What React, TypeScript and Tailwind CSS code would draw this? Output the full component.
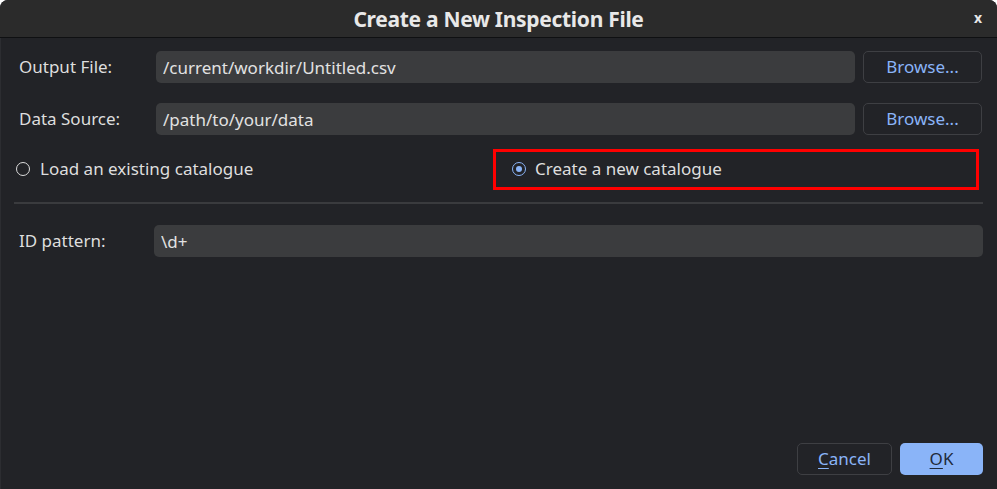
import React, { useState } from 'react';

function Radio({ checked }: { checked: boolean }) {
  return (
    <span
      className={`flex h-[14px] w-[14px] shrink-0 items-center justify-center rounded-full border-[1.5px] ${
        checked ? 'border-[#8ab4f8]' : 'border-[#dcdcdc]'
      }`}
    >
      {checked && <span className="h-[6px] w-[6px] rounded-full bg-[#8ab4f8]" />}
    </span>
  );
}

function TextField({ value, onChange }: { value: string; onChange: (v: string) => void }) {
  return (
    <input
      value={value}
      onChange={(e) => onChange(e.target.value)}
      className="h-[32px] min-w-0 flex-1 rounded-[5px] bg-[#3b3c3e] px-[7px] text-[17px] text-[#e2e2e2] outline-none"
    />
  );
}

export default function App() {
  const [outputFile, setOutputFile] = useState('/current/workdir/Untitled.csv');
  const [dataSource, setDataSource] = useState('/path/to/your/data');
  const [idPattern, setIdPattern] = useState('\\d+');
  const [mode, setMode] = useState<'load' | 'create'>('create');

  return (
    <div className="flex h-[489px] w-[997px] flex-col overflow-hidden rounded-t-[8px] bg-[#222327] font-['Noto_Sans',sans-serif] text-[17px] text-[#dedede]">
      {/* title bar */}
      <div className="relative flex h-[38px] shrink-0 items-center justify-center border-b border-[#0f1012] bg-[#2b2b2b] pt-[2px]">
        <span className="text-[21px] font-bold tracking-[-0.3px] text-[#e8e8e8]">Create a New Inspection File</span>
        <button className="absolute right-[15px] top-[11px] text-[14px] font-bold leading-none text-[#e8e8e8]">x</button>
      </div>

      <div className="flex flex-1 flex-col border-l border-[#2c2d31] pl-[13px] pr-[14px] pt-[13px] pb-[14px]">
        <div className="flex items-center pr-px">
          <label className="w-[142px] shrink-0 pl-[5px]">Output File:</label>
          <TextField value={outputFile} onChange={setOutputFile} />
          <button className="ml-[8px] h-[32px] w-[119px] shrink-0 rounded-[5px] border border-[#3e3f43] text-[#8ab4f8]">Browse...</button>
        </div>

        <div className="mt-[20px] flex items-center pr-px">
          <label className="w-[142px] shrink-0 pl-[5px]">Data Source:</label>
          <TextField value={dataSource} onChange={setDataSource} />
          <button className="ml-[8px] h-[32px] w-[119px] shrink-0 rounded-[5px] border border-[#3e3f43] text-[#8ab4f8]">Browse...</button>
        </div>

        <div className="mt-[14px] flex h-[41px] items-center">
          <button onClick={() => setMode('load')} className="flex w-[479px] items-center gap-[10px] pl-[2px] pb-[2px]">
            <Radio checked={mode === 'load'} />
            <span>Load an existing catalogue</span>
          </button>
          <button
            onClick={() => setMode('create')}
            className="flex h-[41px] w-[486px] items-center gap-[9px] border-[3px] border-[#ff0000] pl-[16px] pb-[2px]"
          >
            <Radio checked={mode === 'create'} />
            <span>Create a new catalogue</span>
          </button>
        </div>

        <div className="mt-[12px] h-[2px] bg-[#3a3b3e]" />

        <div className="mt-[21px] flex items-center">
          <label className="w-[140px] shrink-0 pl-[5px]">ID pattern:</label>
          <TextField value={idPattern} onChange={setIdPattern} />
        </div>

        <div className="mt-auto flex justify-end gap-[8px]">
          <button className="h-[32px] w-[95px] rounded-[5px] border border-[#3e3f43] text-[#8ab4f8]">
            <span className="underline underline-offset-[3px]">C</span>ancel
          </button>
          <button className="h-[32px] w-[83px] rounded-[5px] bg-[#8ab4f8] text-[#1f2a3a]">
            <span className="underline underline-offset-[3px]">O</span>K
          </button>
        </div>
      </div>
    </div>
  );
}
